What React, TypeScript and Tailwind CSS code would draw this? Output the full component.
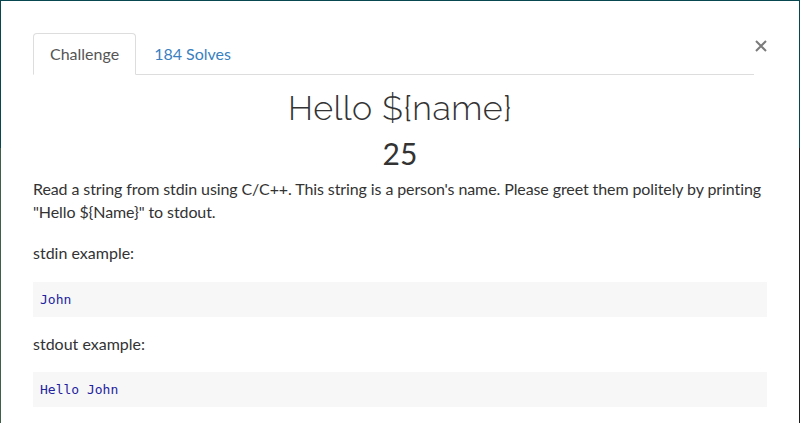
const body = { fontFamily: "Lato, 'Liberation Sans', sans-serif" };
const mono = { fontFamily: "'DejaVu Sans Mono', 'Liberation Mono', monospace" };

function Example({ label, value }: { label: string; value: string }) {
  return (
    <>
      <p className="mb-[17px] text-[16px] leading-[1.42857] text-[#333]">{label}</p>
      <pre
        className="mb-[16px] h-[35px] bg-[#f7f7f7] px-[7px] text-[13px] leading-[35px] text-[#2323a0]"
        style={mono}
      >
        {value}
      </pre>
    </>
  );
}

export default function App() {
  return (
    <div className="flex h-[423px] w-[800px] overflow-hidden bg-white" style={body}>
      {/* backdrop peeking round the edges */}
      <div className="flex w-px flex-col">
        <div className="h-[148px] bg-[#08474f]" />
        <div className="flex-1 bg-[#405f4a]" />
      </div>

      <div className="flex flex-1 flex-col border-t border-[#08474f] px-[32px] pt-[32px]">
        <div className="flex items-start">
          <div className="flex flex-1 border-b border-[#dddddd]">
            <div className="-mb-px mr-[2px] rounded-t-[4px] border border-b-white border-[#dddddd] bg-white px-4 py-2 text-[16px] leading-6 text-[#555]">
              Challenge
            </div>
            <div className="px-4 py-2 pt-[9px] text-[16px] leading-6 text-[#3a7fbf]">184 Solves</div>
          </div>
          <button className="ml-[1px] mt-[7px] flex h-[12px] w-[12px] items-center justify-center text-[#7b7b7b]">
            <svg width="12" height="12" viewBox="0 0 12 12">
              <path d="M1 1 L11 11 M11 1 L1 11" stroke="currentColor" strokeWidth="2" />
            </svg>
          </button>
        </div>

        <h1
          className="mt-[13px] text-center text-[34px] font-light leading-[41px] tracking-[0.5px] text-[#333]"
          style={{ fontFamily: "Raleway, Lato, 'Liberation Sans', sans-serif" }}
        >
          Hello {"${name}"}
        </h1>
        <h2 className="mt-[6px] text-center text-[30px] leading-[36px] text-[#333]">25</h2>

        <p className="mt-[7px] mb-[18px] text-[16px] leading-[1.42857] tracking-[-0.1px] text-[#333]">
          Read a string from stdin using C/C++. This string is a person's name. Please greet them politely by printing
          "Hello {"${Name}"}" to stdout.
        </p>

        <Example label="stdin example:" value="John" />
        <Example label="stdout example:" value="Hello John" />
      </div>

      <div className="flex w-px flex-col">
        <div className="h-[148px] bg-[#08474f]" />
        <div className="flex-1 bg-[#1c1c1c]" />
      </div>
    </div>
  );
}
